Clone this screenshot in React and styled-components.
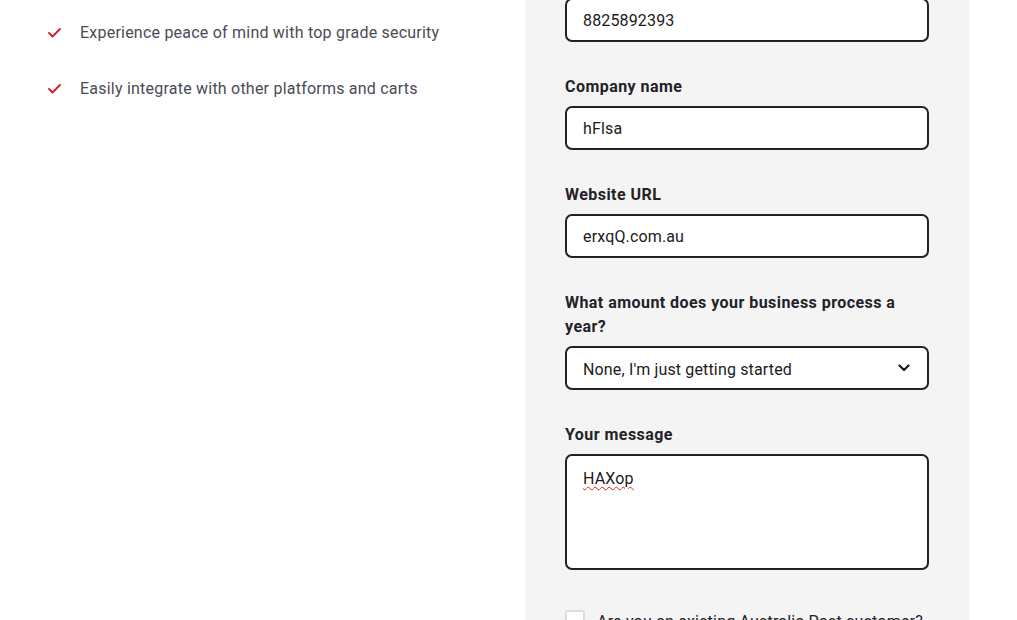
import React from "react";
import styled, { createGlobalStyle } from "styled-components";

const Global = createGlobalStyle`
  html, body { margin: 0; padding: 0; background: #fff; }
  body { font-family: Roboto, "Liberation Sans", sans-serif; overflow: hidden; }
  * { box-sizing: border-box; }
`;

const Page = styled.div`
  display: grid;
  grid-template-columns: 525px 444px 1fr;
  height: 620px;
  overflow: hidden;
`;

const Left = styled.div`
  padding: 21px 0 0 48px;
`;

const List = styled.ul`
  list-style: none;
  margin: 0;
  padding: 0;
  display: flex;
  flex-direction: column;
  gap: 32px;
`;

const Item = styled.li`
  display: flex;
  align-items: center;
  gap: 19px;
  font-size: 16px;
  line-height: 24px;
  letter-spacing: 0.22px;
  color: #4b4b57;
`;

const Panel = styled.div`
  background: #f4f4f4;
  padding: 0 40px;
`;

const Form = styled.div`
  margin-top: -2px;
  display: flex;
  flex-direction: column;
  gap: 32px;
`;

const Field = styled.div`
  display: flex;
  flex-direction: column;
  gap: 8px;
`;

const Label = styled.label`
  font-size: 16px;
  line-height: 24px;
  padding-top: 1px;
  margin-bottom: -1px;
  font-weight: 700;
  color: #222227;
  letter-spacing: 0.45px;
`;

const Box = styled.div`
  position: relative;
  height: ${(p) => p.$h || 44}px;
  background: #fff;
  border: 2px solid #212129;
  border-radius: 7px;
  padding: ${(p) => (p.$area ? "13px 16px" : "0 16px")};
  display: flex;
  align-items: ${(p) => (p.$area ? "flex-start" : "center")};
  font-size: 16px;
  letter-spacing: 0.15px;
  color: #1b1b22;
`;

const SelectText = styled.span`
  padding-top: 3px;
`;

const Wavy = styled.span`
  text-decoration: underline wavy #d22;
  text-decoration-thickness: 1px;
  text-underline-offset: 2px;
`;

const Chevron = styled.svg`
  position: absolute;
  right: 17px;
  top: 50%;
  transform: translateY(-50%);
`;

const CheckRow = styled.div`
  display: flex;
  align-items: flex-start;
  gap: 12px;
  margin-top: 8px;
  font-size: 16px;
  line-height: 24px;
  letter-spacing: 0.2px;
  color: #222227;
`;

const CheckBox = styled.span`
  width: 20px;
  height: 20px;
  border: 2px solid #dcdcdc;
  border-radius: 3px;
  background: #fff;
  flex: none;
`;

const Tick = () => (
  <svg width="13" height="10" viewBox="0 0 13 10" fill="none">
    <path d="M1 5l3.5 3.5L12 1" stroke="#dc1928" strokeWidth="1.8" strokeLinecap="round" strokeLinejoin="round" />
  </svg>
);

export default function App() {
  return (
    <>
      <Global />
      <Page>
        <Left>
          <List>
            <Item><Tick />Experience peace of mind with top grade security</Item>
            <Item><Tick />Easily integrate with other platforms and carts</Item>
          </List>
        </Left>
        <Panel>
          <Form>
            <Field>
              <Box>8825892393</Box>
            </Field>
            <Field>
              <Label>Company name</Label>
              <Box>hFlsa</Box>
            </Field>
            <Field>
              <Label>Website URL</Label>
              <Box>erxqQ.com.au</Box>
            </Field>
            <Field>
              <Label>What amount does your business process a year?</Label>
              <Box>
                <SelectText>None, I'm just getting started</SelectText>
                <Chevron width="12" height="8" viewBox="0 0 12 8" fill="none">
                  <path d="M1.5 1.5L6 6l4.5-4.5" stroke="#1b1b22" strokeWidth="2.2" strokeLinecap="round" strokeLinejoin="round" />
                </Chevron>
              </Box>
            </Field>
            <Field>
              <Label>Your message</Label>
              <Box $area $h={116}><Wavy>HAXop</Wavy></Box>
            </Field>
            <CheckRow>
              <CheckBox />
              Are you an existing Australia Post customer?
            </CheckRow>
          </Form>
        </Panel>
        <div />
      </Page>
    </>
  );
}
